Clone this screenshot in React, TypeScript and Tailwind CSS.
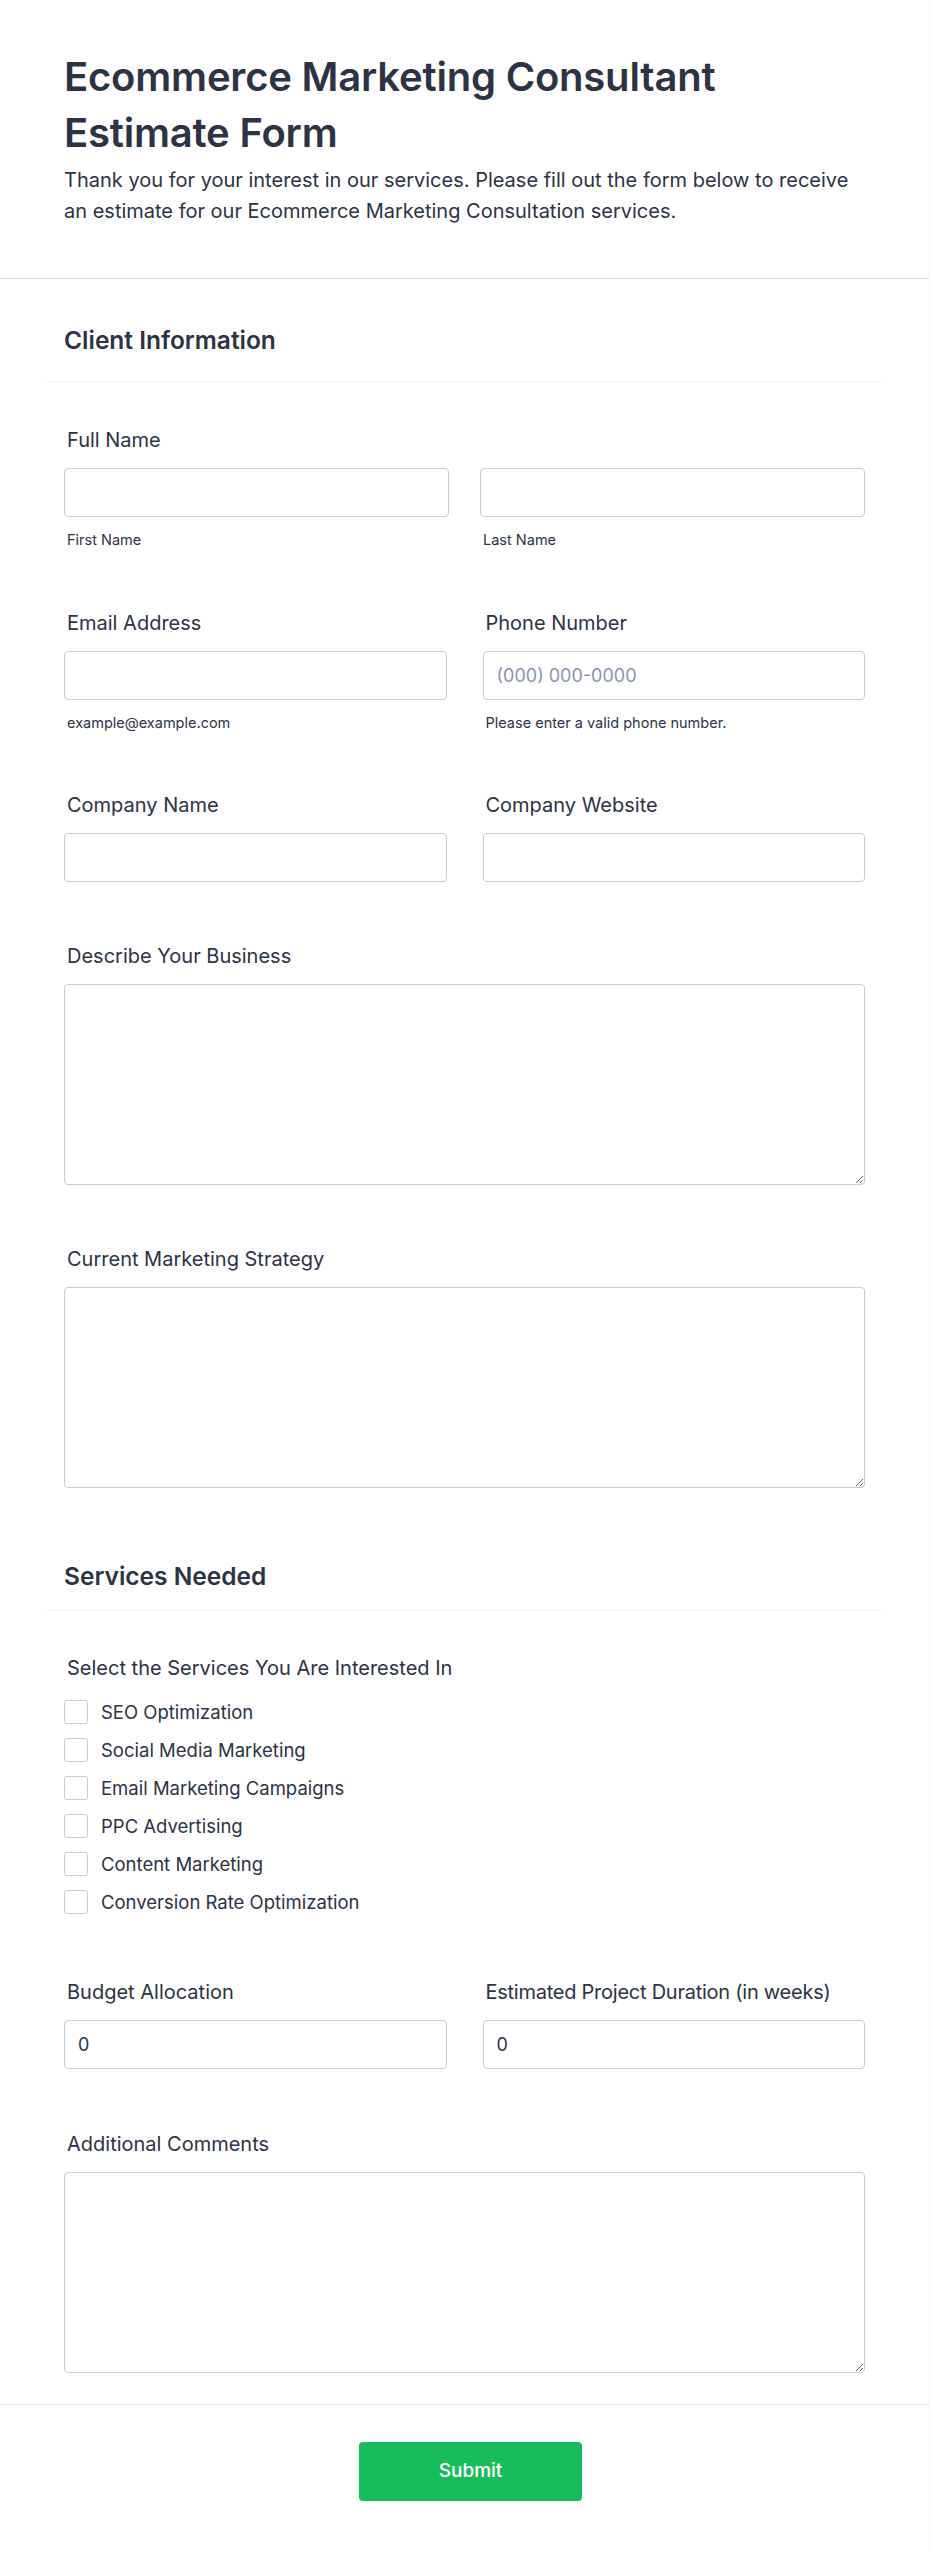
import React from "react";

const font = { fontFamily: "Inter, 'Noto Sans', sans-serif" };

function Label({ children, tight }: { children: React.ReactNode; tight?: boolean }) {
  return (
    <div
      className={
        tight
          ? "pl-[3px] text-[20px] leading-[28px] font-normal tracking-[-0.25px] text-[#2c3345]"
          : "pl-[3px] text-[20px] leading-[28px] font-normal text-[#2c3345]"
      }
    >
      {children}
    </div>
  );
}

function Sub({ children }: { children: React.ReactNode }) {
  return <div className="mt-[13px] pl-[3px] text-[14.5px] leading-[20px] text-[#2c3345]">{children}</div>;
}

function Input({ placeholder, value }: { placeholder?: string; value?: string }) {
  return (
    <input
      className="mt-[14px] block h-[49px] w-full rounded-[4px] border border-[#c3cad8] bg-white px-[13px] text-[18px] text-[#2c3345] placeholder:text-[#8894ab] outline-none"
      placeholder={placeholder}
      defaultValue={value}
      style={font}
    />
  );
}

function Area() {
  return (
    <textarea className="mt-[14px] block h-[201px] w-full rounded-[4px] border border-[#c3cad8] bg-white px-[13px] py-[10px] text-[18px] outline-none" />
  );
}

const services = [
  "SEO Optimization",
  "Social Media Marketing",
  "Email Marketing Campaigns",
  "PPC Advertising",
  "Content Marketing",
  "Conversion Rate Optimization",
];

export default function App() {
  return (
    <div className="min-h-[2550px] w-[930px] bg-white text-[#2c3345] border-r border-[#f1f1f4]" style={font}>
      <header className="border-b border-[#dcdde6] px-[64px] pt-[49px] pb-[51px]">
        <h1 className="text-[40px] leading-[56px] font-semibold tracking-[-0.2px] text-[#2c3345]">
          Ecommerce Marketing Consultant Estimate Form
        </h1>
        <p className="mt-[4px] text-[20px] leading-[31px] text-[#2c3345]">
          Thank you for your interest in our services. Please fill out the form below to receive an estimate for our
          Ecommerce Marketing Consultation services.
        </p>
      </header>

      <section className="px-[46px] pt-[45px]">
        <div className="border-b border-[#eef0f5] px-[18px] pb-[25px]">
          <h2 className="text-[24.5px] leading-[32px] font-semibold">Client Information</h2>
        </div>

        <div className="px-[18px]">
          <div className="mt-[44px]">
            <Label>Full Name</Label>
            <div className="grid grid-cols-2 gap-x-[31px]">
              <div>
                <Input />
                <Sub>First Name</Sub>
              </div>
              <div>
                <Input />
                <Sub>Last Name</Sub>
              </div>
            </div>
          </div>

          <div className="mt-[59px] grid grid-cols-2 gap-x-[36px]">
            <div>
              <Label>Email Address</Label>
              <Input />
              <Sub>example@example.com</Sub>
            </div>
            <div>
              <Label>Phone Number</Label>
              <Input placeholder="(000) 000-0000" />
              <Sub>Please enter a valid phone number.</Sub>
            </div>
          </div>

          <div className="mt-[58px] grid grid-cols-2 gap-x-[36px]">
            <div>
              <Label>Company Name</Label>
              <Input />
            </div>
            <div>
              <Label>Company Website</Label>
              <Input />
            </div>
          </div>

          <div className="mt-[60px]">
            <Label>Describe Your Business</Label>
            <Area />
          </div>

          <div className="mt-[60px]">
            <Label>Current Marketing Strategy</Label>
            <Area />
          </div>
        </div>

        <div className="mt-[72px] border-b border-[#eef0f5] px-[18px] pb-[18px]">
          <h2 className="text-[24.5px] leading-[32px] font-semibold">Services Needed</h2>
        </div>

        <div className="px-[18px]">
          <div className="mt-[43px]">
            <Label>Select the Services You Are Interested In</Label>
            <div className="mt-[18px] flex flex-col gap-[14px]">
              {services.map((s) => (
                <label key={s} className="flex items-center gap-[13px]">
                  <span className="block h-[24px] w-[24px] rounded-[3px] border border-[#c3cad8] bg-white" />
                  <span className="text-[18.5px] leading-[24px] text-[#2c3345]">{s}</span>
                </label>
              ))}
            </div>
          </div>

          <div className="mt-[64px] grid grid-cols-2 gap-x-[36px]">
            <div>
              <Label>Budget Allocation</Label>
              <Input value="0" />
            </div>
            <div>
              <Label tight>Estimated Project Duration (in weeks)</Label>
              <Input value="0" />
            </div>
          </div>

          <div className="mt-[61px] pb-[31px]">
            <Label>Additional Comments</Label>
            <Area />
          </div>
        </div>
      </section>

      <div className="border-t border-[#e3e5ec] flex justify-center pl-[12px] pt-[37px] pb-[50px]">
        <button className="h-[59px] w-[223px] rounded-[4px] bg-[#18bd5b] text-[19px] font-medium text-white">
          Submit
        </button>
      </div>
    </div>
  );
}
